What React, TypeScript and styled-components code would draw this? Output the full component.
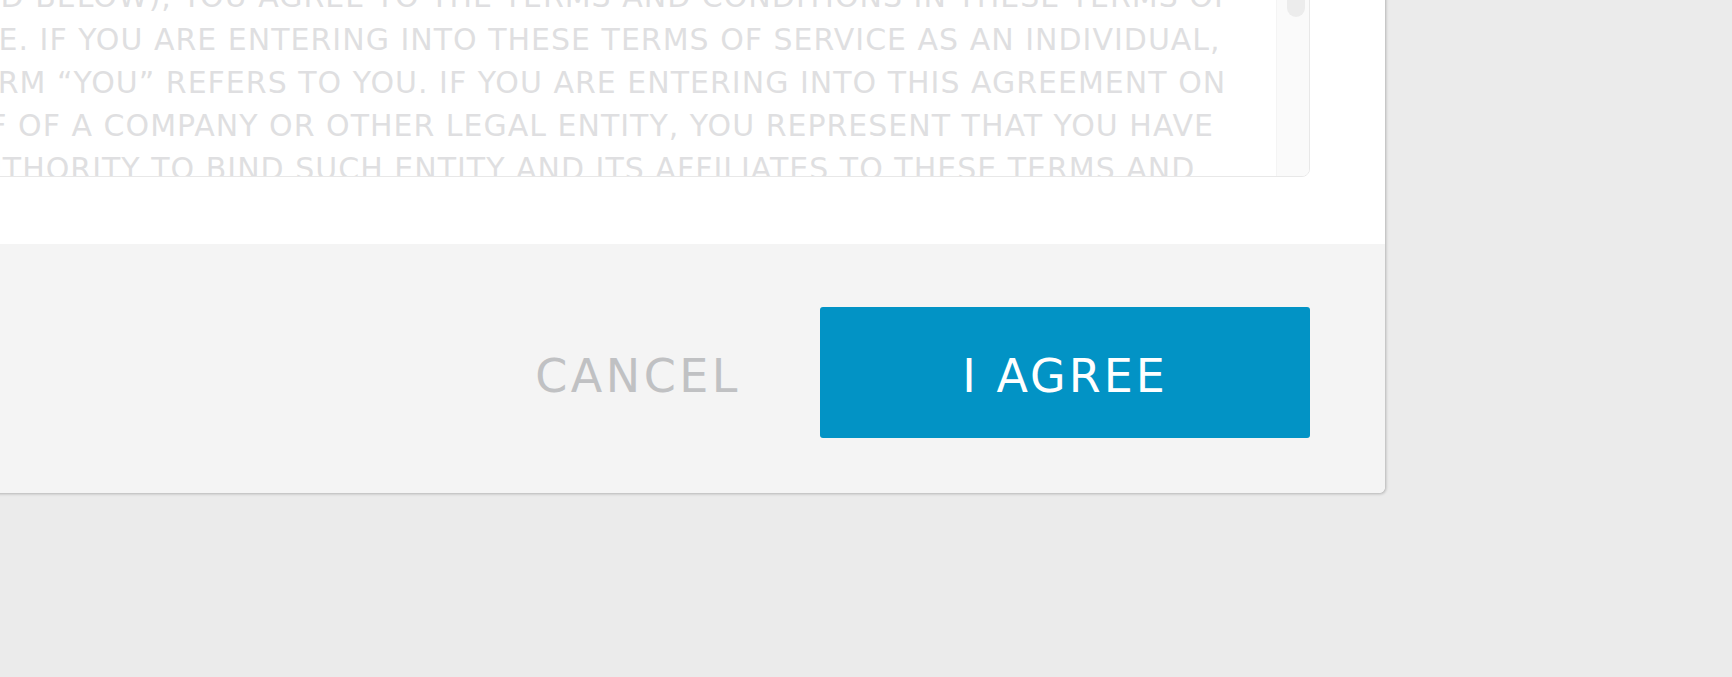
import React from "react";
import styled, { createGlobalStyle } from "styled-components";

const GlobalStyle = createGlobalStyle`
  html, body {
    margin: 0;
    padding: 0;
    background: #ebebeb;
    overflow: hidden;
  }
  * {
    box-sizing: border-box;
  }
`;

const Page = styled.div`
  height: 100vh;
  display: flex;
  flex-direction: column;
  justify-content: flex-end;
  align-items: flex-end;
  padding: 0 347px 184px 0;
  overflow: hidden;
`;

const Modal = styled.div`
  width: 1606px;
  flex-shrink: 0;
  background: #fff;
  border-radius: 6px;
  box-shadow: 1px 1px 3px rgba(0, 0, 0, 0.24);
  font-family: "DejaVu Sans", "Liberation Sans", sans-serif;
  overflow: hidden;
`;

const Body = styled.div`
  padding: 75px 75px 67px 75px;
`;

const TermsBox = styled.div`
  height: 405px;
  display: flex;
  border: 1px solid #e8e8e8;
  border-radius: 8px;
  overflow: hidden;
`;

const TermsText = styled.div`
  flex: 1;
  padding: 30px 0 0 30px;
  overflow: hidden;
  color: #dfdfe1;
  font-size: 30px;
  line-height: 43px;
  letter-spacing: 1px;
  text-transform: uppercase;
`;

const Line = styled.div`
  white-space: nowrap;
`;

const Track = styled.div`
  width: 33px;
  flex-shrink: 0;
  background: #fafafa;
  border-left: 1px solid #f4f4f4;
  padding: 6px 4px 0 10px;
`;

const Thumb = styled.div`
  height: 238px;
  border-radius: 9px;
  background: #ececec;
`;

const Footer = styled.div`
  background: #f4f4f4;
  display: flex;
  justify-content: flex-end;
  align-items: center;
  gap: 79px;
  padding: 63px 75px 55px 0;
`;

const TextButton = styled.button`
  border: none;
  background: none;
  padding: 6px 0 0;
  font-family: inherit;
  font-size: 46px;
  letter-spacing: 3.5px;
  color: #c0c1c3;
  cursor: pointer;
`;

const PrimaryButton = styled.button<{ $width: number }>`
  width: ${(p) => p.$width}px;
  height: 131px;
  padding: 6px 0 0;
  border: none;
  border-radius: 3px;
  background: #0293c5;
  color: #fff;
  font-family: inherit;
  font-size: 46px;
  letter-spacing: 3px;
  cursor: pointer;
`;

const lines = [
  "PLEASE READ THESE TERMS OF SERVICE CAREFULLY BEFORE USING",
  "THE SERVICE. BY CLICKING THE \u201cI AGREE\u201d BUTTON BELOW, OR BY",
  "ACCESSING OR USING ANY PART OF THE SERVICE, OR BY EXECUTING AN",
  "ORDER FORM THAT REFERENCES THESE TERMS (EACH, AS",
  "DEFINED BELOW), YOU AGREE TO THE TERMS AND CONDITIONS IN THESE TERMS OF",
  "SERVICE. IF YOU ARE ENTERING INTO THESE TERMS OF SERVICE AS AN INDIVIDUAL,",
  "THE TERM \u201cYOU\u201d REFERS TO YOU. IF YOU ARE ENTERING INTO THIS AGREEMENT ON",
  "BEHALF OF A COMPANY OR OTHER LEGAL ENTITY, YOU REPRESENT THAT YOU HAVE",
  "THE AUTHORITY TO BIND SUCH ENTITY AND ITS AFFILIATES TO THESE TERMS AND",
  "CONDITIONS, IN WHICH CASE THE TERMS \u201cYOU\u201d OR \u201cYOUR\u201d SHALL REFER",
];

export default function App() {
  return (
    <>
      <GlobalStyle />
      <Page>
        <Modal>
          <Body>
            <TermsBox>
              <TermsText>
                {lines.map((l, i) => (
                  <Line key={i}>{l}</Line>
                ))}
              </TermsText>
              <Track>
                <Thumb />
              </Track>
            </TermsBox>
          </Body>
          <Footer>
            <TextButton>CANCEL</TextButton>
            <PrimaryButton $width={490}>I AGREE</PrimaryButton>
          </Footer>
        </Modal>
      </Page>
    </>
  );
}
